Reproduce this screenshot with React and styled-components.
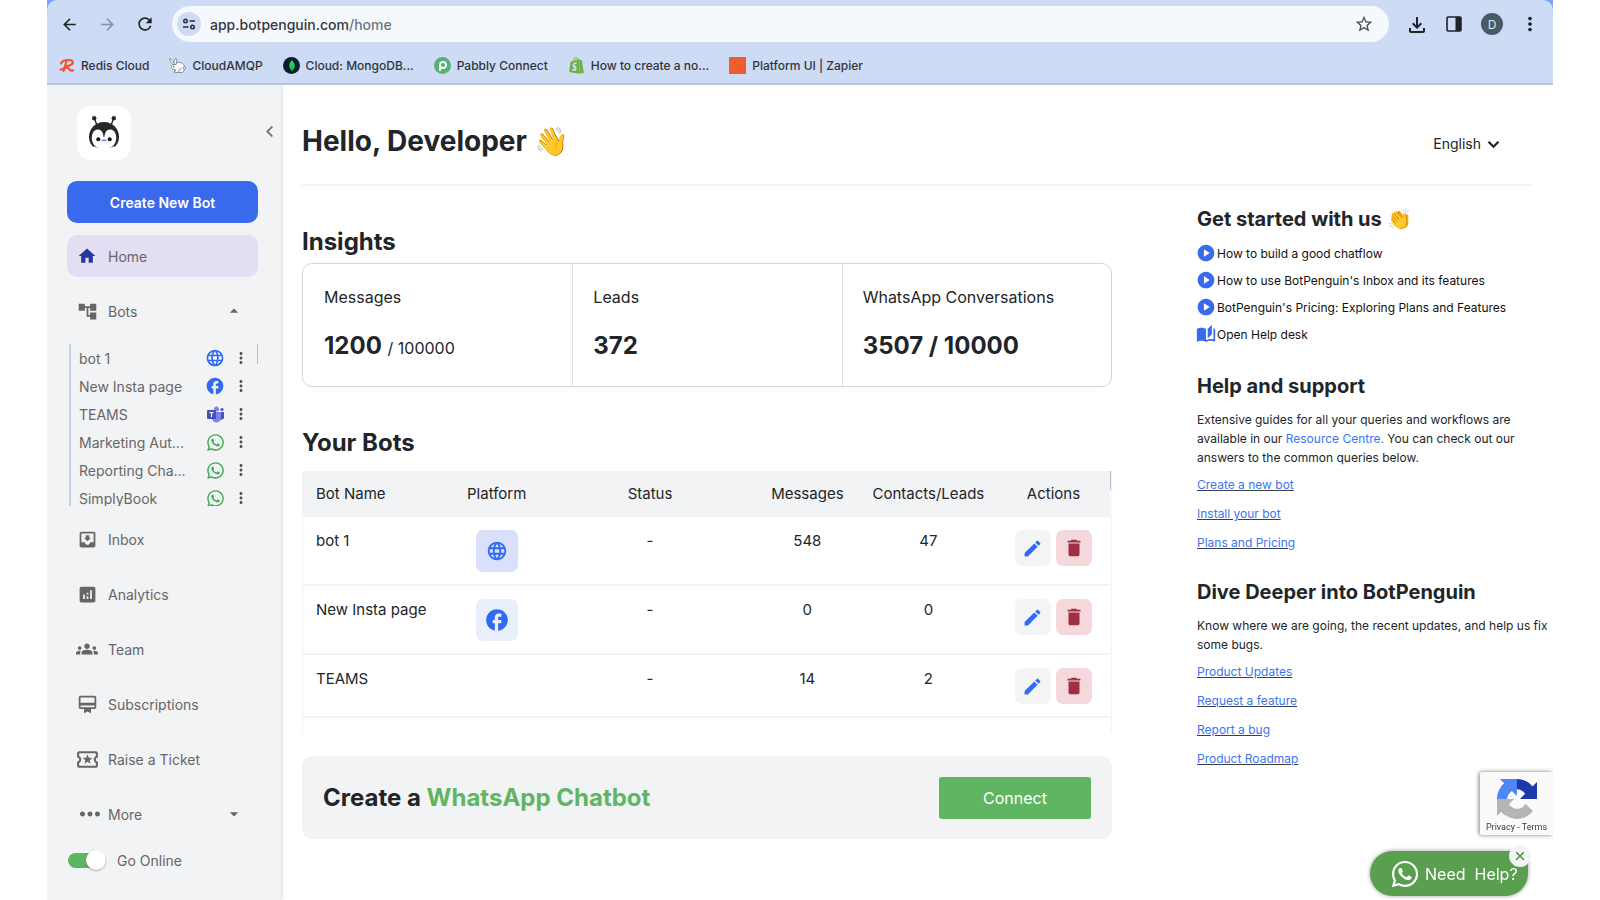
import React from "react";
import styled, { createGlobalStyle } from "styled-components";
import {
  MdAccountTree,
  MdAnalytics,
  MdArrowBack,
  MdArrowDropDown,
  MdArrowDropUp,
  MdArrowForward,
  MdAutoStories,
  MdCardMembership,
  MdDelete,
  MdEdit,
  MdFacebook,
  MdGroups,
  MdHome,
  MdLanguage,
  MdMoreHoriz,
  MdMoreVert,
  MdMoveToInbox,
  MdOutlineFileDownload,
  MdOutlineLocalActivity,
  MdPlayCircle,
  MdRefresh,
  MdStarBorder
} from "react-icons/md";
import { FaChevronLeft, FaShopify, FaWhatsapp } from "react-icons/fa";
import { IoClose } from "react-icons/io5";
import { SiMongodb } from "react-icons/si";

const GlobalStyle = createGlobalStyle`
  *, *::before, *::after { box-sizing: border-box; }
  body {
    margin: 0;
    background: #fff;
    color: #212529;
    font-family: Inter, "Liberation Sans", sans-serif;
  }
  h1, h2, p, ul { margin: 0; padding: 0; }
  ul { list-style: none; }
  button, input, select { font: inherit; color: inherit; margin: 0; }
  button { border: 0; padding: 0; background: none; cursor: pointer; }
  svg { display: block; flex: none; }
`;

/* Browser chrome */

const Page = styled.div`
  min-height: 100vh;
  padding: 0 47px;
  display: flex;
  flex-direction: column;
`;

const Chrome = styled.header`
  background: #7ba4f8;
`;

const ChromeInner = styled.div`
  padding-top: 6px;
  border-radius: 10px 10px 0 0;
  background: #cedbf5;
  border-bottom: 2px solid #b9c4dc;
`;

const Toolbar = styled.div`
  display: flex;
  align-items: center;
  gap: 16px;
  padding: 0 12px 0 11px;
`;

const ToolButton = styled.button`
  width: 22px;
  height: 22px;
  display: grid;
  place-items: center;
  color: ${props => (props.$muted ? "#8490a8" : "#1f2328")};
`;

const AddressBar = styled.div`
  flex: 1;
  height: 36px;
  padding: 0 14px 0 5px;
  border-radius: 18px;
  background: #f5f9fe;
  display: flex;
  align-items: center;
  gap: 9px;
  font-size: 14px;
  font-weight: 500;
  color: #33373c;
`;

const SiteInfo = styled.button`
  width: 24px;
  height: 24px;
  border-radius: 50%;
  background: #cedbf5;
  display: grid;
  place-items: center;
`;

const Url = styled.span`
  flex: 1;
`;

const UrlPath = styled.span`
  color: #70757b;
`;

const Avatar = styled.button`
  width: 22px;
  height: 22px;
  border-radius: 50%;
  background: #475a66;
  color: #dfe5e8;
  font-size: 12px;
`;

const Tools = styled.div`
  display: flex;
  align-items: center;
  gap: 16px;
`;

const Bookmarks = styled.nav`
  height: 41px;
  padding: 6px 12px 0;
  display: flex;
  align-items: center;
  gap: 20px;
`;

const Bookmark = styled.a`
  display: flex;
  align-items: center;
  gap: 6px;
  font-size: 12px;
  font-weight: 500;
  line-height: 18px;
  color: #30353c;
  text-decoration: none;
`;

/* Sidebar */

const Body = styled.div`
  flex: 1;
  display: flex;
  overflow: clip;
`;

const Sidebar = styled.aside`
  width: 234px;
  padding: 21px 23px 0 20px;
  background: #f2f3f5;
  box-shadow: 0 0 4px rgba(0, 0, 0, 0.25);
  color: #666;
`;

const Brand = styled.div`
  display: flex;
  justify-content: space-between;
  height: 54px;
  padding-left: 10px;
`;

const Logo = styled.a`
  width: 54px;
  height: 54px;
  border-radius: 14px;
  background: #fff;
  display: grid;
  place-items: center;
`;

const Collapse = styled.button`
  height: 50px;
  margin-right: -18px;
  color: #7b7b7b;
`;

const CreateButton = styled.button`
  width: 100%;
  height: 42px;
  margin: 21px 0 12px;
  border-radius: 10px;
  background: #3969ec;
  color: #fff;
  font-size: 14px;
  font-weight: 600;
`;

const Nav = styled.nav`
  display: flex;
  flex-direction: column;
  gap: 13px;
`;

const NavItem = styled.a`
  height: 42px;
  padding: 0 14px 0 8px;
  display: flex;
  align-items: center;
  gap: 9px;
  border-radius: 10px;
  background: ${props => (props.$active ? "#e3def3" : "transparent")};
  font-size: 14px;
  color: #666;
  text-decoration: none;
`;

const NavIcon = styled.span`
  width: 24px;
  display: grid;
  place-items: center;
  color: ${props => (props.$active ? "#22399b" : "#666")};
`;

const NavLabel = styled.span`
  flex: 1;
`;

const BotScroller = styled.div`
  height: 162px;
  margin: -1px 0;
  overflow: hidden;
  display: flex;
`;

const BotList = styled.ul`
  flex: 1;
  border-left: 2px solid #cbd0e6;
  padding-left: 8px;
  margin-left: 2px;
`;

const BotItem = styled.li`
  height: 28px;
  display: flex;
  align-items: center;
  gap: 7px;
  font-size: 14px;
`;

const BotName = styled.span`
  flex: 1;
`;

const BotIcon = styled.span`
  width: 20px;
  display: grid;
  place-items: center;
`;

const MenuButton = styled.button`
  margin-right: 7px;
  color: #555;
`;

const ScrollThumb = styled.span`
  width: 1px;
  height: ${props => props.$size};
  background: #b6bdd6;
`;

const OnlineToggle = styled.label`
  display: flex;
  align-items: center;
  gap: 11px;
  height: 24px;
  margin-top: 13px;
  padding-left: 1px;
  font-size: 14px;
`;

const Switch = styled.input`
  appearance: none;
  width: 38px;
  height: 15px;
  border-radius: 8px;
  background: #bbb;
  display: flex;
  align-items: center;

  &::before {
    content: "";
    width: 20px;
    height: 20px;
    flex: none;
    border-radius: 50%;
    background: #fff;
    box-shadow: 0 1px 2px rgba(0, 0, 0, 0.3);
  }

  &:checked {
    background: #5fb562;
    justify-content: flex-end;
  }
`;

/* Main area */

const Main = styled.main`
  flex: 1;
  min-width: 0;
  padding-left: 21px;
`;

const PageHeader = styled.header`
  display: flex;
  align-items: center;
  justify-content: space-between;
  margin-right: 21px;
  padding: 39px 32px 26px 0;
  border-bottom: 2px solid #f3f4f5;
`;

const Greeting = styled.h1`
  font-size: 28px;
  line-height: 34px;
`;

const LanguagePicker = styled.label`
  display: flex;
  align-items: center;
  gap: 6px;
  padding-top: 4px;
  font-size: 14px;

  svg {
    margin-top: 3px;
  }
`;

const LanguageSelect = styled.select`
  appearance: none;
  border: 0;
  padding: 0;
  background: none;
  field-sizing: content;
`;

const Columns = styled.div`
  display: flex;
  gap: 85px;
`;

const Content = styled.div`
  flex: 1;
  min-width: 0;
  padding-top: 41px;
`;

const SectionTitle = styled.h2`
  font-size: 24px;
  line-height: 30px;
`;

const Stats = styled.div`
  display: grid;
  grid-template-columns: repeat(3, 1fr);
  margin: 6px 0 41px;
  border: 1px solid #d5d6d8;
  border-radius: 10px;
`;

const Stat = styled.div`
  padding: 23px 20px;
  display: flex;
  flex-direction: column;
  gap: 24px;

  & + & {
    border-left: 1px solid #dfe0e2;
  }

  &:first-child {
    padding-left: 21px;
  }
`;

const StatLabel = styled.span`
  font-size: 16px;
  line-height: 20px;
`;

const StatValue = styled.strong`
  font-size: 24px;
  line-height: 30px;
`;

const StatLimit = styled.span`
  font-size: 16px;
  font-weight: 400;
`;

const TableScroller = styled.div`
  height: 261px;
  margin: 13px 0 24px;
  overflow: hidden;
  display: flex;
  border-left: 1px solid #f2f3f5;
  border-right: 1px solid #f2f3f5;
`;

const Table = styled.table`
  flex: 1;
  align-self: flex-start;
  table-layout: fixed;
  border-collapse: separate;
  border-spacing: 0;
  font-size: 15px;
  line-height: 22px;

  th:last-child,
  td:last-child {
    padding-left: 8px;
  }
`;

const Th = styled.th`
  width: ${props => props.$width};
  height: 46px;
  padding: ${props => (props.$left ? "0 0 0 13px" : "0")};
  background: #f2f3f5;
  font-weight: 400;
  text-align: ${props => (props.$left ? "left" : "center")};
`;

const Td = styled.td`
  padding: ${props => (props.$left ? "13px 0 12px 13px" : "13px 0 12px")};
  border-bottom: 2px solid #f2f3f5;
  vertical-align: top;
  text-align: ${props => (props.$left ? "left" : "center")};
`;

const PlatformTile = styled.span`
  width: 42px;
  height: 42px;
  margin: 0 auto;
  border-radius: 7px;
  background: ${props => props.$color};
  color: #316bf2;
  display: grid;
  place-items: center;
`;

const RowActions = styled.div`
  display: flex;
  justify-content: center;
  gap: 5px;
`;

const ActionButton = styled.button`
  width: 36px;
  height: 36px;
  border-radius: 7px;
  background: ${props => (props.$danger ? "#f4d8dc" : "#f2f4f6")};
  color: ${props => (props.$danger ? "#9f2f42" : "#316bf2")};
  display: grid;
  place-items: center;
`;

const Banner = styled.section`
  height: 83px;
  padding: 0 21px;
  border-radius: 10px;
  background: #f2f3f5;
  display: flex;
  align-items: center;
  justify-content: space-between;
`;

const Accent = styled.span`
  color: #5fb562;
`;

const ConnectButton = styled.button`
  width: 152px;
  height: 42px;
  border-radius: 3px;
  background: #5fb562;
  color: #fff;
  font-size: 16px;
`;

/* Help column */

const Help = styled.aside`
  width: 356px;
  padding-top: 21px;
  display: flex;
  flex-direction: column;
  gap: 28px;
`;

const HelpSection = styled.section`
  font-size: 12px;
  line-height: 19px;
`;

const HelpTitle = styled.h2`
  margin-bottom: ${props => (props.$tight ? "10px" : "12px")};
  font-size: 20px;
  line-height: 24px;
`;

const GuideList = styled.ul`
  display: flex;
  flex-direction: column;
  gap: 3px;
`;

const Guide = styled.a`
  height: 24px;
  margin-left: -1px;
  display: flex;
  align-items: center;
  gap: 1px;
  color: #111;
  text-decoration: none;

  svg {
    color: #3969ec;
  }
`;

const LinkList = styled.ul`
  margin-top: 8px;
  display: flex;
  flex-direction: column;
  gap: 10px;
`;

const BlueLink = styled.a`
  color: #3b76f0;
  text-decoration: ${props => (props.$plain ? "none" : "underline")};
  text-decoration-color: #3a3f46;
`;

/* Floating widgets */

const Captcha = styled.div`
  position: fixed;
  right: 47px;
  bottom: 65px;
  width: 73px;
  height: 63px;
  padding-top: 7px;
  border-radius: 2px 0 0 2px;
  background: #fafafa;
  box-shadow: -1px 0 4px rgba(0, 0, 0, 0.5);
  clip-path: inset(-6px 0 -6px -6px);
  display: flex;
  flex-direction: column;
  align-items: center;
  gap: 2px;
  font-family: Roboto, sans-serif;
  font-size: 9px;
  line-height: 12px;
  color: #444;
`;

const CaptchaLink = styled.a`
  color: inherit;
  text-decoration: none;
`;

const HelpWidget = styled.div`
  position: fixed;
  right: 72px;
  bottom: 4px;
`;

const HelpButton = styled.button`
  width: 158px;
  height: 45px;
  padding-left: 20px;
  border-radius: 23px 12px 23px 23px;
  background: #5a9f50;
  box-shadow: 0 0 4px rgba(0, 0, 0, 0.4);
  color: #fff;
  font-size: 16px;
  white-space: pre;
  display: flex;
  align-items: center;
  gap: 5px;
`;

const CloseButton = styled.button`
  position: absolute;
  top: -6px;
  right: -3px;
  width: 22px;
  height: 22px;
  border-radius: 50%;
  background: #f3f5f6;
  color: #4a9640;
  display: grid;
  place-items: center;
`;

const RedisIcon = () => (
  <svg width="16" height="16" viewBox="0 0 16 16" fill="none" stroke="#f0532f" strokeWidth="2.2" strokeLinecap="round" strokeLinejoin="round">
    <path d="M2 5.500C2.500 3.500 6 2 10 2c4.500 0 5 3.500 1.500 5L5.500 9.500" />
    <path d="M7.500 3.500 4.500 13M8.500 9c1.500 2.500 3 4.500 5.500 3.500" />
    <path d="M1.500 11.500c2 .2 5-1.500 7-2.500" />
  </svg>
);

const RabbitIcon = () => (
  <svg width="17" height="17" viewBox="0 0 17 17" fill="#f6f6f6" stroke="#777b85" strokeWidth=".8">
    <path d="M7 7C8 4 14 5 15.500 9c.8 2-.2 5-2 6.500H6.500c-2 0-1-1.500.3-1.800L5 12.500C2 12 1.500 9 3.500 7.500z" />
    <path d="M4 7.500C2 6 .5 3.500.7 1.500 3 2.500 4.500 4.500 5 6.500 5 4 5.500 2 7 1c1 2 .8 4.500 0 6.500z" />
    <path d="M10 15.500c-.5-2 .5-4 2.500-4M5 15.500l1.500-3" fill="none" />
    <circle cx="4.500" cy="9.500" r=".5" fill="#333" />
    <circle cx="15.500" cy="11" r="1.300" />
  </svg>
);

const MongoIcon = () => (
  <svg width="17" height="17" viewBox="0 0 17 17">
    <circle cx="8.500" cy="8.500" r="8.500" fill="#06202c" />
    <SiMongodb x="3" y="3" width="11" height="11" color="#32d05a" />
  </svg>
);

const PabblyIcon = () => (
  <svg width="17" height="17" viewBox="0 0 17 17">
    <circle cx="8.500" cy="8.500" r="8.500" fill="#57b077" />
    <circle cx="9" cy="8" r="3" fill="none" stroke="#fff" strokeWidth="1.800" />
    <path d="M6 8v6" stroke="#fff" strokeWidth="1.800" />
  </svg>
);

const ZapierIcon = () => (
  <svg width="17" height="17">
    <rect width="17" height="17" fill="#ee5d31" />
  </svg>
);

const TuneIcon = () => (
  <svg width="14" height="12" viewBox="0 0 14 12" fill="none" stroke="#2b3038" strokeWidth="1.600">
    <circle cx="3.500" cy="3" r="1.700" />
    <path d="M7.500 3H13M1 9h5.500" />
    <circle cx="10.500" cy="9" r="1.700" />
  </svg>
);

const PanelIcon = () => (
  <svg width="16" height="16" viewBox="0 0 16 16">
    <rect x="1" y="1" width="14" height="14" rx="1" fill="none" stroke="#1f2328" strokeWidth="1.600" />
    <path d="M9.500 1H15v14H9.500z" fill="#1f2328" />
  </svg>
);

const PenguinLogo = () => (
  <svg width="32" height="34" viewBox="0 0 32 34">
    <path d="M6.500 2 9 10M25.500 2 23 10" stroke="#25282d" strokeWidth="1.400" />
    <circle cx="6.200" cy="2.200" r="2.200" fill="#25282d" />
    <circle cx="25.800" cy="2.200" r="2.200" fill="#25282d" />
    <path d="M16 6C7 6 1 13 1 21c0 5 2.500 9 6.500 11h17c4-2 6.500-6 6.500-11C31 13 25 6 16 6z" fill="#25282d" />
    <path d="M15.500 21c0-4-2-7.500-5.700-7.500-4 0-6 4-6 8.500 0 6 4 11 12.200 11s12.200-5 12.200-11c0-4.500-2-8.500-6-8.500-3.700 0-5.700 3.500-5.700 7.500z" fill="#fff" />
    <path d="M6 30c3 3 17 3 20 0v4H6z" fill="#fff" />
    <circle cx="10.300" cy="23.300" r="2" fill="#111" />
    <circle cx="21.700" cy="23.300" r="2" fill="#111" />
    <path d="M16 23c1.500 0 2.800 1 2.800 2.300h-5.600C13.200 24 14.500 23 16 23z" fill="#6f9cf5" />
  </svg>
);

const TeamsIcon = () => (
  <svg width="17" height="17" viewBox="0 0 17 17">
    <circle cx="15" cy="3.500" r="1.600" fill="#4a55bb" />
    <path d="M13 6h4v5.500c0 1.700-2 2.700-4 2z" fill="#4a55bb" />
    <circle cx="9.500" cy="3" r="2.500" fill="#7b83eb" />
    <path d="M5 6h9v6c0 2.500-2 4.500-4.500 4.500S5 14.500 5 12z" fill="#7b83eb" />
    <rect y="4" width="9" height="9" rx="1" fill="#4650b5" />
    <path d="M2.500 6.500h4M4.500 6.500v4.500" stroke="#fff" strokeWidth="1.200" />
  </svg>
);

const CaptchaLogo = () => (
  <svg width="40" height="40" viewBox="0 0 64 64">
    <path fill="#1c3aa9" d="M64 31.955l-.033-1.370V4.687l-7.160 7.160C50.948 4.674 42.033.093 32.050.093c-10.400 0-19.622 4.960-25.458 12.640l11.736 11.860a15.550 15.550 0 0 1 4.754-5.334c2.050-1.600 4.952-2.906 8.968-2.906.485 0 .860.057 1.135.163 4.976.393 9.288 3.140 11.828 7.124l-8.307 8.307L64 31.953" />
    <path fill="#4f87f7" d="M31.862.094l-1.370.033H4.594l7.160 7.160C4.580 13.147 0 22.060 0 32.046c0 10.400 4.960 19.622 12.640 25.458L24.500 45.768a15.550 15.550 0 0 1-5.334-4.754c-1.600-2.050-2.906-4.952-2.906-8.968 0-.485.057-.860.163-1.135.393-4.976 3.140-9.288 7.124-11.828l8.307 8.307L31.860.095" />
    <path fill="#b4b6b6" d="M.001 32.045l.033 1.370v25.898l7.160-7.160c5.860 7.173 14.774 11.754 24.760 11.754 10.400 0 19.622-4.960 25.458-12.640l-11.736-11.860a15.550 15.550 0 0 1-4.754 5.334c-2.050 1.600-4.952 2.906-8.968 2.906-.485 0-.860-.057-1.135-.163-4.976-.393-9.288-3.140-11.828-7.124l8.307-8.307c-10.522.040-22.400.066-27.295-.005" />
  </svg>
);

const ChevronDown = () => (
  <svg width="13" height="9" viewBox="0 0 14 10" fill="none" stroke="#1b1e22" strokeWidth="2.400">
    <path d="m1.500 2 5.500 5.500L12.500 2" />
  </svg>
);

const bookmarks = [
  { title: "Redis Cloud", icon: <RedisIcon /> },
  { title: "CloudAMQP", icon: <RabbitIcon /> },
  { title: "Cloud: MongoDB...", icon: <MongoIcon /> },
  { title: "Pabbly Connect", icon: <PabblyIcon /> },
  { title: "How to create a no...", icon: <FaShopify size={17} color="#6fae45" /> },
  { title: "Platform UI | Zapier", icon: <ZapierIcon /> }
];

const sidebarBots = [
  { name: "bot 1", icon: <MdLanguage size={20} color="#316bf2" /> },
  { name: "New Insta page", icon: <MdFacebook size={20} color="#316bf2" /> },
  { name: "TEAMS", icon: <TeamsIcon /> },
  { name: "Marketing Aut...", icon: <FaWhatsapp size={19} color="#3fa652" /> },
  { name: "Reporting Cha...", icon: <FaWhatsapp size={19} color="#3fa652" /> },
  { name: "SimplyBook", icon: <FaWhatsapp size={19} color="#3fa652" /> }
];

const navItems = [
  { title: "Inbox", icon: <MdMoveToInbox size={21} /> },
  { title: "Analytics", icon: <MdAnalytics size={21} /> },
  { title: "Team", icon: <MdGroups size={22} /> },
  { title: "Subscriptions", icon: <MdCardMembership size={21} /> },
  { title: "Raise a Ticket", icon: <MdOutlineLocalActivity size={25} /> },
  { title: "More", icon: <MdMoreHoriz size={30} />, expandable: true }
];

const tableBots = [
  { name: "bot 1", tile: "#dadffa", icon: <MdLanguage size={22} />, messages: 548, leads: 47 },
  { name: "New Insta page", tile: "#e8eefa", icon: <MdFacebook size={26} />, messages: 0, leads: 0 },
  { name: "TEAMS", messages: 14, leads: 2 }
];

const guides = [
  "How to build a good chatflow",
  "How to use BotPenguin's Inbox and its features",
  "BotPenguin's Pricing: Exploring Plans and Features"
];

function Links({ items }) {
  return (
    <LinkList>
      {items.map(item => (
        <li key={item}>
          <BlueLink href="#">{item}</BlueLink>
        </li>
      ))}
    </LinkList>
  );
}

function BrowserBar() {
  return (
    <Chrome>
      <ChromeInner>
        <Toolbar>
          <ToolButton aria-label="Back">
            <MdArrowBack size={19} />
          </ToolButton>
          <ToolButton $muted aria-label="Forward">
            <MdArrowForward size={19} />
          </ToolButton>
          <ToolButton aria-label="Reload">
            <MdRefresh size={20} />
          </ToolButton>
          <AddressBar>
            <SiteInfo aria-label="Site information">
              <TuneIcon />
            </SiteInfo>
            <Url>
              app.botpenguin.com<UrlPath>/home</UrlPath>
            </Url>
            <ToolButton aria-label="Bookmark this page">
              <MdStarBorder size={20} color="#4c5157" />
            </ToolButton>
          </AddressBar>
          <Tools>
            <ToolButton aria-label="Downloads">
              <MdOutlineFileDownload size={24} />
            </ToolButton>
            <ToolButton aria-label="Side panel">
              <PanelIcon />
            </ToolButton>
            <Avatar aria-label="Profile">D</Avatar>
            <ToolButton aria-label="Menu">
              <MdMoreVert size={22} />
            </ToolButton>
          </Tools>
        </Toolbar>
        <Bookmarks>
          {bookmarks.map(({ title, icon }) => (
            <Bookmark href="#" key={title}>
              {icon}
              {title}
            </Bookmark>
          ))}
        </Bookmarks>
      </ChromeInner>
    </Chrome>
  );
}

function SideNav() {
  return (
    <Sidebar>
      <Brand>
        <Logo href="#" aria-label="BotPenguin">
          <PenguinLogo />
        </Logo>
        <Collapse aria-label="Collapse sidebar">
          <FaChevronLeft size={13} />
        </Collapse>
      </Brand>
      <CreateButton>Create New Bot</CreateButton>
      <Nav>
        <NavItem href="#" $active>
          <NavIcon $active>
            <MdHome size={20} />
          </NavIcon>
          <NavLabel>Home</NavLabel>
        </NavItem>
        <NavItem href="#">
          <NavIcon>
            <MdAccountTree size={21} />
          </NavIcon>
          <NavLabel>Bots</NavLabel>
          <MdArrowDropUp size={20} />
        </NavItem>
        <BotScroller>
          <BotList>
            {sidebarBots.map(({ name, icon }) => (
              <BotItem key={name}>
                <BotName>{name}</BotName>
                <BotIcon>{icon}</BotIcon>
                <MenuButton aria-label={`${name} menu`}>
                  <MdMoreVert size={18} />
                </MenuButton>
              </BotItem>
            ))}
          </BotList>
          <ScrollThumb $size="20px" />
        </BotScroller>
        {navItems.map(({ title, icon, expandable }) => (
          <NavItem href="#" key={title}>
            <NavIcon>{icon}</NavIcon>
            <NavLabel>{title}</NavLabel>
            {expandable && <MdArrowDropDown size={20} />}
          </NavItem>
        ))}
      </Nav>
      <OnlineToggle>
        <Switch type="checkbox" defaultChecked />
        Go Online
      </OnlineToggle>
    </Sidebar>
  );
}

function BotsTable() {
  return (
    <TableScroller>
      <Table>
        <thead>
          <tr>
            <Th $left $width="17%">Bot Name</Th>
            <Th $width="14%">Platform</Th>
            <Th $width="24%">Status</Th>
            <Th $width="15%">Messages</Th>
            <Th $width="15%">Contacts/Leads</Th>
            <Th $width="15%">Actions</Th>
          </tr>
        </thead>
        <tbody>
          {tableBots.map(({ name, tile, icon, messages, leads }) => (
            <tr key={name}>
              <Td $left>{name}</Td>
              <Td>{icon && <PlatformTile $color={tile}>{icon}</PlatformTile>}</Td>
              <Td>-</Td>
              <Td>{messages}</Td>
              <Td>{leads}</Td>
              <Td>
                <RowActions>
                  <ActionButton aria-label={`Edit ${name}`}>
                    <MdEdit size={21} />
                  </ActionButton>
                  <ActionButton $danger aria-label={`Delete ${name}`}>
                    <MdDelete size={22} />
                  </ActionButton>
                </RowActions>
              </Td>
            </tr>
          ))}
        </tbody>
      </Table>
      <ScrollThumb $size="19px" />
    </TableScroller>
  );
}

export default function App() {
  return (
    <Page>
      <GlobalStyle />
      <BrowserBar />
      <Body>
        <SideNav />
        <Main>
          <PageHeader>
            <Greeting>Hello, Developer 👋</Greeting>
            <LanguagePicker>
              <LanguageSelect aria-label="Language">
                <option>English</option>
              </LanguageSelect>
              <ChevronDown />
            </LanguagePicker>
          </PageHeader>
          <Columns>
            <Content>
              <SectionTitle>Insights</SectionTitle>
              <Stats>
                <Stat>
                  <StatLabel>Messages</StatLabel>
                  <StatValue>
                    1200 <StatLimit>/ 100000</StatLimit>
                  </StatValue>
                </Stat>
                <Stat>
                  <StatLabel>Leads</StatLabel>
                  <StatValue>372</StatValue>
                </Stat>
                <Stat>
                  <StatLabel>WhatsApp Conversations</StatLabel>
                  <StatValue>3507 / 10000</StatValue>
                </Stat>
              </Stats>
              <SectionTitle>Your Bots</SectionTitle>
              <BotsTable />
              <Banner>
                <SectionTitle>
                  Create a <Accent>WhatsApp Chatbot</Accent>
                </SectionTitle>
                <ConnectButton>Connect</ConnectButton>
              </Banner>
            </Content>
            <Help>
              <HelpSection>
                <HelpTitle $tight>Get started with us 👏</HelpTitle>
                <GuideList>
                  {guides.map(guide => (
                    <li key={guide}>
                      <Guide href="#">
                        <MdPlayCircle size={20} />
                        {guide}
                      </Guide>
                    </li>
                  ))}
                  <li>
                    <Guide href="#">
                      <MdAutoStories size={20} />
                      Open Help desk
                    </Guide>
                  </li>
                </GuideList>
              </HelpSection>
              <HelpSection>
                <HelpTitle>Help and support</HelpTitle>
                <p>
                  Extensive guides for all your queries and workflows are
                  available in our{" "}
                  <BlueLink href="#" $plain>
                    Resource Centre.
                  </BlueLink>{" "}
                  You can check out our answers to the common queries below.
                </p>
                <Links items={["Create a new bot", "Install your bot", "Plans and Pricing"]} />
              </HelpSection>
              <HelpSection>
                <HelpTitle>Dive Deeper into BotPenguin</HelpTitle>
                <p>
                  Know where we are going, the recent updates, and help us fix
                  some bugs.
                </p>
                <Links items={["Product Updates", "Request a feature", "Report a bug", "Product Roadmap"]} />
              </HelpSection>
            </Help>
          </Columns>
        </Main>
      </Body>
      <Captcha>
        <CaptchaLogo />
        <span>
          <CaptchaLink href="#">Privacy</CaptchaLink> -{" "}
          <CaptchaLink href="#">Terms</CaptchaLink>
        </span>
      </Captcha>
      <HelpWidget>
        <HelpButton>
          <FaWhatsapp size={30} />
          {"Need  Help?"}
        </HelpButton>
        <CloseButton aria-label="Close">
          <IoClose size={16} />
        </CloseButton>
      </HelpWidget>
    </Page>
  );
}
